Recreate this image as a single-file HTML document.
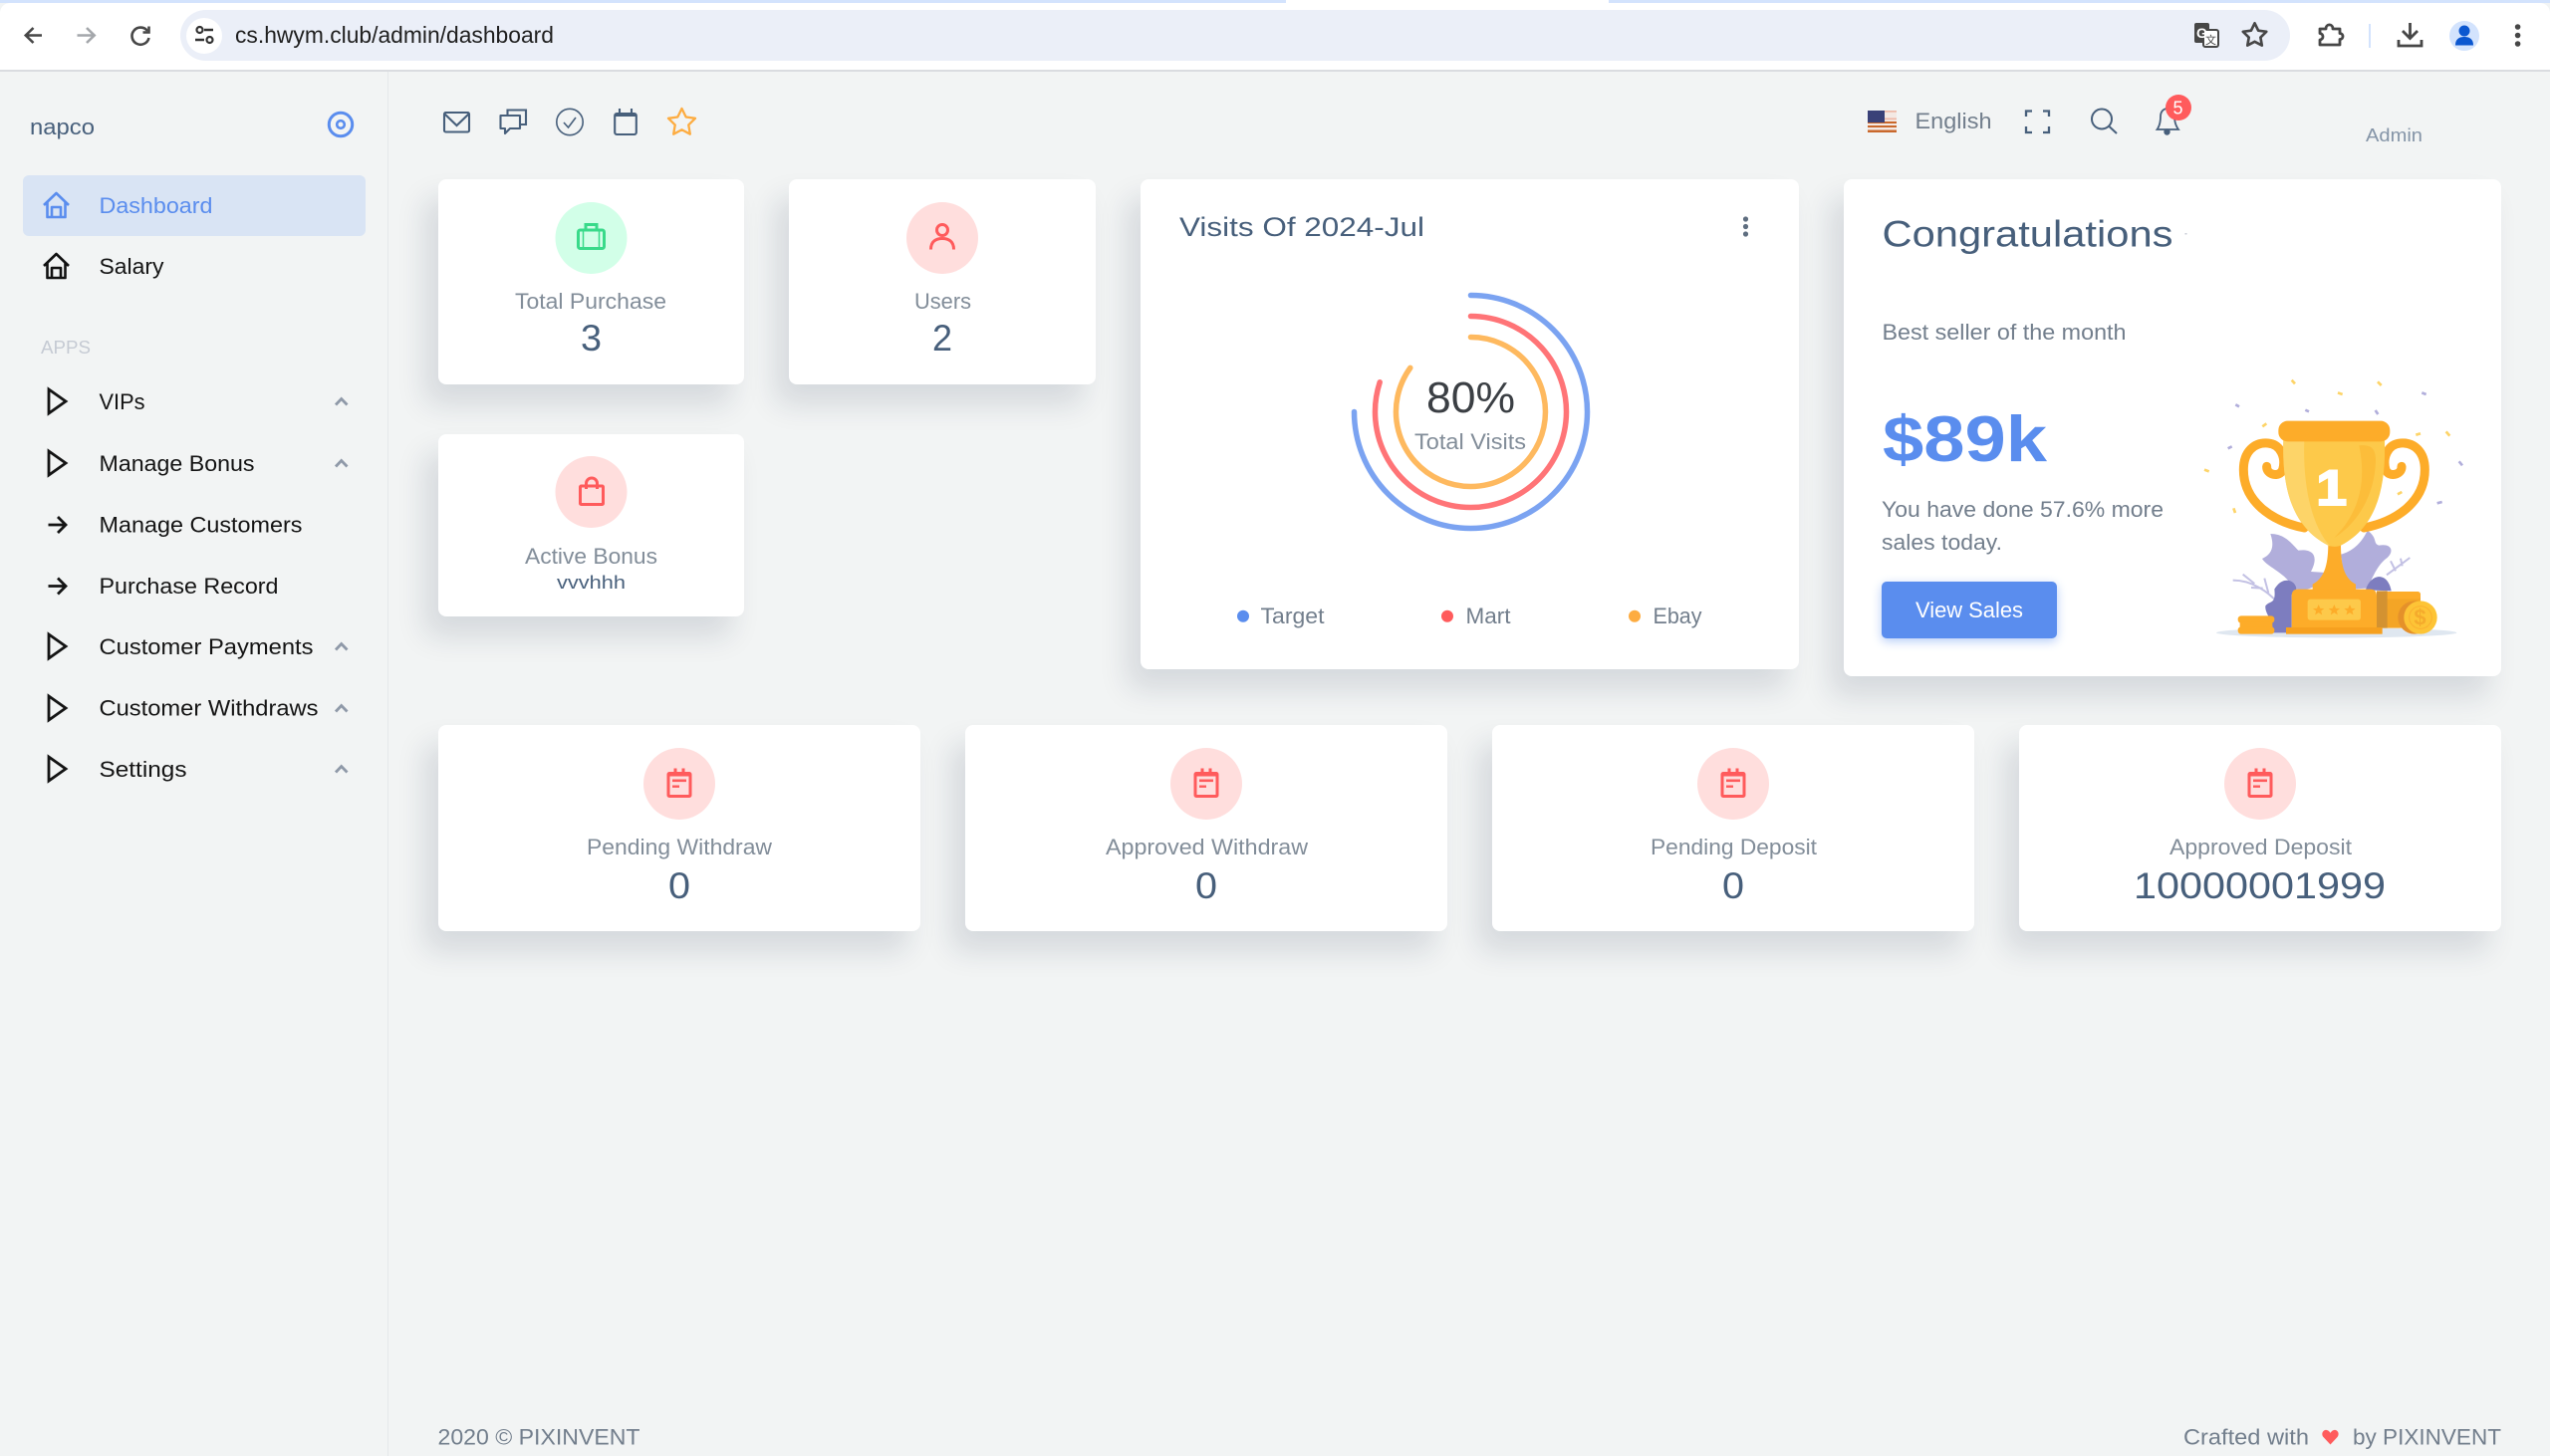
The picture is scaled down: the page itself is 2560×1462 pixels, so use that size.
<!DOCTYPE html>
<html lang="en">
<head>
<meta charset="utf-8">
<title>Dashboard</title>
<style>
html,body{margin:0;padding:0;background:#f2f4f4}
body{position:relative;width:2560px;height:1462px;overflow:hidden;font-family:"Liberation Sans",sans-serif}
.a{position:absolute}
.card{position:absolute;background:#fff;border-radius:8px;box-shadow:-13px 20px 29px 0 rgba(25,42,70,.13)}
svg{position:absolute;left:0;top:0}
text{font-family:"Liberation Sans",sans-serif}
.m{font-size:22px;fill:#141414}
.lab{font-size:22px;fill:#828d99}
.num{font-size:37px;fill:#475f7b}
.gr{font-size:22px;fill:#727e8c}
</style>
</head>
<body>
<div class="a" style="left:0;top:0;width:2560px;height:3px;background:#d3e3fd"></div>
<div class="a" style="left:1291px;top:0;width:324px;height:3px;background:#fff"></div>
<div class="a" style="left:0;top:3px;width:2560px;height:67px;background:#fff;border-radius:10px 10px 0 0"></div>
<div class="a" style="left:0;top:70px;width:2560px;height:2px;background:#dadce0"></div>
<div class="a" style="left:181px;top:10px;width:2118px;height:51px;background:#ebeff8;border-radius:26px"></div>
<div class="a" style="left:187px;top:18px;width:36px;height:36px;background:#fff;border-radius:50%"></div>
<div class="a" style="left:389px;top:72px;width:1px;height:1390px;background:#e5e8ea"></div>
<div class="a" style="left:23px;top:176px;width:344px;height:61px;background:#d9e4f4;border-radius:6px"></div>

<div class="card" style="left:440px;top:180px;width:307px;height:206px"></div>
<div class="card" style="left:792px;top:180px;width:308px;height:206px"></div>
<div class="card" style="left:440px;top:436px;width:307px;height:183px"></div>
<div class="card" style="left:1145px;top:180px;width:661px;height:492px"></div>
<div class="card" style="left:1851px;top:180px;width:660px;height:499px"></div>
<div class="card" style="left:440px;top:728px;width:484px;height:207px"></div>
<div class="card" style="left:969px;top:728px;width:484px;height:207px"></div>
<div class="card" style="left:1498px;top:728px;width:484px;height:207px"></div>
<div class="card" style="left:2027px;top:728px;width:484px;height:207px"></div>

<svg width="2560" height="1462" viewBox="0 0 2560 1462" xmlns="http://www.w3.org/2000/svg">
<!-- browser chrome -->
<g fill="none" stroke="#474747" stroke-width="2.6">
<path d="M42 35.5H26M33.5 28L25.8 35.5L33.5 43"/>
<path d="M77.5 35.5H94M87 28L94.7 35.5L87 43" stroke="#a4a7ab"/>
<path d="M148 31A8.6 8.6 0 1 0 149.5 38"/><path d="M149.5 26.5V32.5H143.5"/>
<path d="M205 30H214M196 40H205" stroke="#333" stroke-width="2.4"/>
<circle cx="200.5" cy="30" r="3" stroke="#333" stroke-width="2.2"/>
<circle cx="210.5" cy="40" r="3" stroke="#333" stroke-width="2.2"/>
</g>
<text x="236" y="43" font-size="23" fill="#1f1f1f" textLength="320" lengthAdjust="spacingAndGlyphs">cs.hwym.club/admin/dashboard</text>
<rect x="2203" y="23" width="15" height="20" rx="2" fill="#474747"/>
<rect x="2212" y="30" width="15" height="17" rx="2" fill="#fff" stroke="#474747" stroke-width="2"/>
<text x="2205" y="38" font-size="14" font-weight="bold" fill="#fff">G</text>
<text x="2214" y="44" font-size="11" fill="#474747" style='font-family:"Liberation Sans","Noto Sans CJK SC",sans-serif'>文</text>
<g transform="translate(2249.5 21) scale(1.17)"><path d="M12 2L15.09 8.26L22 9.27L17 14.14L18.18 21.02L12 17.77L5.82 21.02L7 14.14L2 9.27L8.91 8.26Z" fill="none" stroke="#474747" stroke-width="2.3" stroke-linejoin="round"/></g>
<path d="M2329 29H2335C2335 23.5 2342 23.5 2342 29H2349V33.5C2353 33.5 2353 39.5 2349 39.5V45H2329V40C2333 39.5 2333 34 2329 33.5Z" fill="none" stroke="#474747" stroke-width="2.8" stroke-linejoin="round"/>
<rect x="2378" y="24" width="2" height="24" fill="#d3e3fd"/>
<path d="M2419.5 23V38M2412 31L2419.5 38.5L2427 31M2408 40V46H2431V40" fill="none" stroke="#474747" stroke-width="2.8"/>
<circle cx="2474" cy="36" r="15" fill="#d3e3fd"/>
<circle cx="2474" cy="31" r="5.5" fill="#0b57d0"/>
<path d="M2465 45.5C2465 39 2469 37 2474 37C2479 37 2483 39 2483 45.5Z" fill="#0b57d0"/>
<g fill="#474747"><circle cx="2527.6" cy="27" r="2.8"/><circle cx="2527.6" cy="35.5" r="2.8"/><circle cx="2527.6" cy="44" r="2.8"/></g>

<!-- sidebar -->
<text x="30" y="135" font-size="22" fill="#475f7b" textLength="65" lengthAdjust="spacingAndGlyphs">napco</text>
<circle cx="342" cy="125" r="11.7" fill="none" stroke="#5a8dee" stroke-width="3"/>
<circle cx="342" cy="125" r="3.8" fill="none" stroke="#5a8dee" stroke-width="2.6"/>
<g fill="none" stroke="#5a8dee" stroke-width="2.6" stroke-linejoin="round"><path d="M44 206L56.5 194L69 206M47.5 203V218H65.5V203M52 218V208H61V218"/></g>
<text x="99.500" y="214" font-size="22" fill="#5a8dee" textLength="114" lengthAdjust="spacingAndGlyphs">Dashboard</text>
<g fill="none" stroke="#111" stroke-width="2.6" stroke-linejoin="round"><path d="M44 267L56.5 255L69 267M47.5 264V279H65.5V264M52 279V269H61V279"/></g>
<text x="99.500" y="275" class="m" textLength="65" lengthAdjust="spacingAndGlyphs">Salary</text>
<text x="41" y="355" font-size="18.5" fill="#c5cad3" textLength="50" lengthAdjust="spacingAndGlyphs">APPS</text>

<g fill="none" stroke="#141414" stroke-width="2.8" stroke-linejoin="miter">
<path d="M49 391L66 403L49 415Z"/>
<path d="M49 453L66 465L49 477Z"/>
<path d="M48.500 527H66M58 519L66 527L58 535"/>
<path d="M48.500 588.5H66M58 580.5L66 588.5L58 596.5"/>
<path d="M49 637L66 649L49 661Z"/>
<path d="M49 699L66 711L49 723Z"/>
<path d="M49 760L66 772L49 784Z"/>
</g>
<text x="99.500" y="411" class="m" textLength="46" lengthAdjust="spacingAndGlyphs">VIPs</text>
<text x="99.500" y="473" class="m" textLength="156" lengthAdjust="spacingAndGlyphs">Manage Bonus</text>
<text x="99.500" y="534.5" class="m" textLength="204" lengthAdjust="spacingAndGlyphs">Manage Customers</text>
<text x="99.500" y="596" class="m" textLength="180" lengthAdjust="spacingAndGlyphs">Purchase Record</text>
<text x="99.500" y="657" class="m" textLength="215" lengthAdjust="spacingAndGlyphs">Customer Payments</text>
<text x="99.500" y="718.5" class="m" textLength="220" lengthAdjust="spacingAndGlyphs">Customer Withdraws</text>
<text x="99.500" y="780" class="m" textLength="88" lengthAdjust="spacingAndGlyphs">Settings</text>
<g fill="none" stroke="#8f99a8" stroke-width="2.8">
<path d="M337 406.5L342.7 400.5L348.5 406.5"/>
<path d="M337 468.5L342.7 462.5L348.5 468.5"/>
<path d="M337 652.5L342.7 646.5L348.5 652.5"/>
<path d="M337 714.5L342.7 708.5L348.5 714.5"/>
<path d="M337 775.5L342.7 769.5L348.5 775.5"/>
</g>

<!-- top nav -->
<g fill="none" stroke="#475f7b" stroke-width="2.1">
<rect x="446" y="113" width="25" height="19.5" rx="1.5"/>
<path d="M446 114L458.5 126L471 114"/>
<path d="M502.5 116H522V129H512L507 134V129H502.5Z" stroke-linejoin="round"/>
<path d="M509.5 115V110.5H528V125H523"/>
<circle cx="572" cy="122.5" r="13.200" stroke-width="1.6"/>
<path d="M566 123L570.5 128L578 118" stroke-width="1.6"/>
<rect x="617.2" y="114" width="21.6" height="21" rx="2"/>
<path d="M622 109V114M634 109V114"/>
<path d="M617 115.500H639" stroke-width="3"/>
<g transform="translate(668.3 106.3) scale(1.35)"><path d="M12 2L15.09 8.26L22 9.27L17 14.14L18.18 21.02L12 17.77L5.82 21.02L7 14.14L2 9.27L8.91 8.26Z" stroke="#fdac41" stroke-width="1.7" stroke-linejoin="round"/></g>
<path d="M2034 117V111.5H2040M2051 111.5H2057V117M2034 127V133H2040M2051 133H2057V127" stroke-width="2.3"/>
<circle cx="2110" cy="119.5" r="10" stroke-width="2"/>
<path d="M2117.5 127L2125 134" stroke-width="2"/>
<path d="M2165.5 130C2168.5 126 2169 122 2169 117C2169 112 2172 109 2176 109C2180 109 2183 112 2183 117C2183 122 2184 126 2187 130Z" stroke-width="1.8"/>
</g>
<circle cx="2175.5" cy="132.5" r="3.2" fill="#475f7b"/>
<circle cx="2187" cy="108" r="13" fill="#ff5b5c"/>
<text x="2181.500" y="114.500" font-size="18" fill="#fff">5</text>
<rect x="1875" y="111" width="29" height="22" fill="#f4e9e4"/>
<g fill="#c9682c"><rect x="1875" y="111" width="29" height="1.7" fill="#eeb9a8"/><rect x="1875" y="118.5" width="29" height="1.7" fill="#eeb9a8"/><rect x="1875" y="122" width="29" height="2"/><rect x="1875" y="126" width="29" height="2"/><rect x="1875" y="130.5" width="29" height="2.5"/></g>
<rect x="1875" y="111" width="17" height="12" fill="#3a4178"/>
<text x="1922.500" y="129" class="gr" textLength="77" lengthAdjust="spacingAndGlyphs">English</text>
<text x="2375" y="142" font-size="18.5" fill="#8494a7" textLength="57" lengthAdjust="spacingAndGlyphs">Admin</text>

<!-- stat circles -->
<circle cx="593.5" cy="239" r="36" fill="#d2ffe8"/>
<circle cx="946" cy="239" r="36" fill="#ffdedd"/>
<circle cx="593.5" cy="494" r="36" fill="#ffdedd"/>
<g fill="none" stroke="#39da8a" stroke-width="3">
<rect x="580.5" y="231" width="26" height="18.5" rx="2"/>
<path d="M588 231V225.5H599V231"/>
<path d="M585.5 231V249M601.500 231V249" stroke-width="1.5"/>
</g>
<g fill="none" stroke="#ff5b5c" stroke-width="3">
<circle cx="946" cy="231" r="5.5"/>
<path d="M934.5 250.5C934.5 242 940 239.5 946 239.5C952 239.5 957.5 242 957.5 250.5"/>
<rect x="582.5" y="488" width="23" height="18.5" rx="1"/>
<path d="M588.5 491V485.5A5.5 5.5 0 0 1 599.5 485.5V491"/>
</g>
<text x="517" y="310" class="lab" textLength="152" lengthAdjust="spacingAndGlyphs">Total Purchase</text>
<text x="583" y="352" class="num" textLength="21" lengthAdjust="spacingAndGlyphs">3</text>
<text x="918" y="310" class="lab" textLength="57" lengthAdjust="spacingAndGlyphs">Users</text>
<text x="936" y="352" class="num" textLength="20" lengthAdjust="spacingAndGlyphs">2</text>
<text x="527" y="566" class="lab" textLength="133" lengthAdjust="spacingAndGlyphs">Active Bonus</text>
<text x="559" y="591" font-size="18" fill="#475f7b" textLength="69" lengthAdjust="spacingAndGlyphs">vvvhhh</text>

<!-- visits -->
<text x="1184" y="237" font-size="26.5" fill="#475f7b" textLength="246" lengthAdjust="spacingAndGlyphs">Visits Of 2024-Jul</text>
<g fill="#5f6e80"><circle cx="1752.500" cy="220" r="2.6"/><circle cx="1752.500" cy="227.5" r="2.6"/><circle cx="1752.500" cy="235" r="2.6"/></g>
<g fill="none" stroke-width="5.5" stroke-linecap="round">
<path d="M1476.5 296.5A117 117 0 1 1 1359.5 413.5" stroke="#7ba3f1"/>
<path d="M1476.5 317.5A96 96 0 1 1 1385.2 383.8" stroke="#ff7477"/>
<path d="M1476.5 338.5A75 75 0 1 1 1415.8 369.4" stroke="#feb95f"/>
</g>
<text x="1432" y="414" font-size="44" fill="#3b3f44" textLength="89" lengthAdjust="spacingAndGlyphs">80%</text>
<text x="1420" y="451" class="lab" textLength="112" lengthAdjust="spacingAndGlyphs">Total Visits</text>
<circle cx="1248" cy="618.7" r="6" fill="#5a8dee"/>
<circle cx="1453" cy="618.7" r="6" fill="#ff5b5c"/>
<circle cx="1641" cy="618.7" r="6" fill="#fdac41"/>
<text x="1265.500" y="626" class="gr" textLength="64" lengthAdjust="spacingAndGlyphs">Target</text>
<text x="1471.500" y="626" class="gr" textLength="45" lengthAdjust="spacingAndGlyphs">Mart</text>
<text x="1659.5" y="626" class="gr" textLength="49" lengthAdjust="spacingAndGlyphs">Ebay</text>

<!-- congrats -->
<text x="1889.500" y="247.500" font-size="37" fill="#475f7b" textLength="292" lengthAdjust="spacingAndGlyphs">Congratulations</text>
<rect x="2193.500" y="234" width="2" height="1.500" fill="#c9ccd6"/>
<text x="1889.500" y="341" class="gr" textLength="245" lengthAdjust="spacingAndGlyphs">Best seller of the month</text>
<text x="1890" y="463" font-size="65" font-weight="bold" fill="#5a8dee" textLength="165" lengthAdjust="spacingAndGlyphs">$89k</text>
<text x="1889" y="519" class="gr" textLength="283" lengthAdjust="spacingAndGlyphs">You have done 57.6% more</text>
<text x="1889" y="552" class="gr" textLength="121" lengthAdjust="spacingAndGlyphs">sales today.</text>
<rect x="1889" y="584" width="176" height="57" rx="5" fill="#5a8dee" style="filter:drop-shadow(0 3px 5px rgba(90,141,238,.45))"/>
<text x="1923" y="620" font-size="22" fill="#fff" textLength="108" lengthAdjust="spacingAndGlyphs">View Sales</text>

<!-- trophy -->
<defs><path id="st" d="M0 -17L5 -5.5L17 -5L7.5 2.5L10.5 14L0 7.5L-10.5 14L-7.5 2.5L-17 -5L-5 -5.5Z" fill="#fdac29"/></defs>
<g transform="translate(2180 360) scale(.33333)">
<ellipse cx="497" cy="826" rx="362" ry="15" fill="#dfe7f0"/>
<g fill="#b1aedb">
<path d="M370 695C345 645 290 630 273 603C300 590 312 570 298 528C340 528 360 555 382 578C432 572 442 600 420 642L466 645C450 675 430 692 400 697Z"/>
<path d="M540 695C512 650 515 612 510 590C542 582 572 558 590 518C622 540 606 558 625 563C662 556 672 580 650 600C622 620 610 650 590 692Z"/>
</g>
<g fill="none" stroke="#c3c1e4" stroke-width="6"><path d="M185 668C240 668 290 700 322 738M215 650L250 678M240 690L275 692M280 662L292 706M648 652L718 600M660 610L675 640M690 602L695 625"/></g>
<path d="M310 695C335 652 375 668 376 695L362 712V810L345 826H302C312 790 280 772 283 745C296 728 315 742 310 695Z" fill="#7d7dbf"/>
<path d="M585 697C598 650 650 638 662 700Z" fill="#7d7dbf"/>
<rect x="618" y="706" width="132" height="106" rx="6" fill="#f4a526"/>
<rect x="618" y="702" width="132" height="22" rx="8" fill="#fdac29"/>
<path d="M618 700H650V812H618Z" fill="#d39231"/>
<g fill="#fdac29"><rect x="200" y="775" width="110" height="22" rx="10"/><rect x="206" y="795" width="98" height="16"/><rect x="200" y="808" width="110" height="22" rx="10"/></g>
<circle cx="732" cy="780" r="50" fill="#e5912a"/>
<circle cx="750" cy="780" r="50" fill="#fdc436"/>
<circle cx="750" cy="780" r="34" fill="#fdc436" stroke="#fbb030" stroke-width="3"/>
<text x="730" y="803" font-size="66" font-weight="bold" fill="#f5ab2c">$</text>
<g fill="none" stroke="#fdac29" stroke-width="27" stroke-linecap="round">
<path d="M400 510C300 490 217 430 217 335C217 280 250 252 290 255C330 258 345 300 335 335C325 360 285 350 287 325"/>
<path d="M580 510C680 490 763 430 763 335C763 280 730 252 690 255C650 258 635 300 645 335C655 360 695 350 693 325"/>
</g>
<path d="M472 555H510C510 610 515 660 555 680V697H425V680C465 660 472 610 472 555Z" fill="#fdac29"/>
<path d="M337 246H642C646 385 620 505 512 562C500 568 482 568 470 562C360 505 333 385 337 246Z" fill="#fdc94a"/>
<path d="M337 246H400C395 380 420 500 478 566C358 505 333 385 337 246Z" fill="#fdd468"/>
<path d="M565 262C600 258 616 270 615 310C612 400 570 490 490 540C560 470 590 380 565 262Z" fill="#fcbd3a"/>
<rect x="322" y="188" width="336" height="62" rx="28" fill="#fdac29"/>
<path d="M362 810V715Q362 695 382 695H598Q618 695 618 715V810Z" fill="#fdac29"/>
<rect x="345" y="810" width="290" height="20" fill="#f6a01f"/>
<rect x="410" y="725" width="160" height="63" rx="8" fill="#fdc94a"/>
<use href="#st" x="443" y="758"/><use href="#st" x="490" y="758"/><use href="#st" x="537" y="758"/>
<text x="436" y="441" font-size="150" font-weight="bold" fill="#fff" stroke="#fff" stroke-width="6" textLength="92" lengthAdjust="spacingAndGlyphs">1</text>
<g fill="none" stroke-width="8" stroke-linecap="butt">
<path d="M193 139L204 145M403 155L414 160M170 271L182 265M614 156L622 168M754 103L767 108M866 310L876 322M800 436L815 432" stroke="#b1aedb"/>
<path d="M362 65L372 76M621 70L632 81M501 103L515 108M274 205L286 196M99 335L113 340M187 451L192 465M736 230L750 226M827 220L838 233M681 409L694 402" stroke="#fdd468"/>
</g>
</g>

<!-- bottom cards -->
<g fill="#ffdedd"><circle cx="682" cy="787" r="36"/><circle cx="1211" cy="787" r="36"/><circle cx="1740" cy="787" r="36"/><circle cx="2269" cy="787" r="36"/></g>
<defs><g id="cal"><rect x="-11" y="-10" width="22" height="23" rx="1" fill="none" stroke="#ff5b5c" stroke-width="3"/><path d="M-4 -15V-10M4 -15V-10" stroke="#ff5b5c" stroke-width="3"/><rect x="-11" y="-10" width="22" height="3" fill="#ff5b5c"/><rect x="-7" y="-4" width="14" height="2.6" fill="#ff5b5c"/><rect x="-7" y="2" width="7" height="2.4" fill="#ff5b5c"/></g></defs>
<use href="#cal" x="682" y="786.5"/><use href="#cal" x="1211" y="786.5"/><use href="#cal" x="1740" y="786.5"/><use href="#cal" x="2269" y="786.5"/>
<text x="589" y="858" class="lab" textLength="186" lengthAdjust="spacingAndGlyphs">Pending Withdraw</text>
<text x="1110" y="858" class="lab" textLength="203" lengthAdjust="spacingAndGlyphs">Approved Withdraw</text>
<text x="1657" y="858" class="lab" textLength="167" lengthAdjust="spacingAndGlyphs">Pending Deposit</text>
<text x="2178" y="858" class="lab" textLength="183" lengthAdjust="spacingAndGlyphs">Approved Deposit</text>
<text x="671" y="902" class="num" textLength="22" lengthAdjust="spacingAndGlyphs">0</text>
<text x="1200" y="902" class="num" textLength="22" lengthAdjust="spacingAndGlyphs">0</text>
<text x="1729" y="902" class="num" textLength="22" lengthAdjust="spacingAndGlyphs">0</text>
<text x="2142" y="902" class="num" textLength="253" lengthAdjust="spacingAndGlyphs">10000001999</text>

<!-- footer -->
<text x="439.500" y="1450.5" class="gr" textLength="203" lengthAdjust="spacingAndGlyphs">2020 © PIXINVENT</text>
<text x="2192" y="1450.5" class="gr" textLength="126" lengthAdjust="spacingAndGlyphs">Crafted with</text>
<path d="M2339.5 1450.5L2332.5 1443C2329.5 1439 2333 1435 2336 1436C2338 1436.5 2339 1438 2339.5 1439C2340 1438 2341 1436.5 2343 1436C2346 1435 2349.5 1439 2346.5 1443Z" fill="#ff5b5c"/>
<text x="2362" y="1450.5" class="gr" textLength="149" lengthAdjust="spacingAndGlyphs">by PIXINVENT</text>
</svg>
</body>
</html>
